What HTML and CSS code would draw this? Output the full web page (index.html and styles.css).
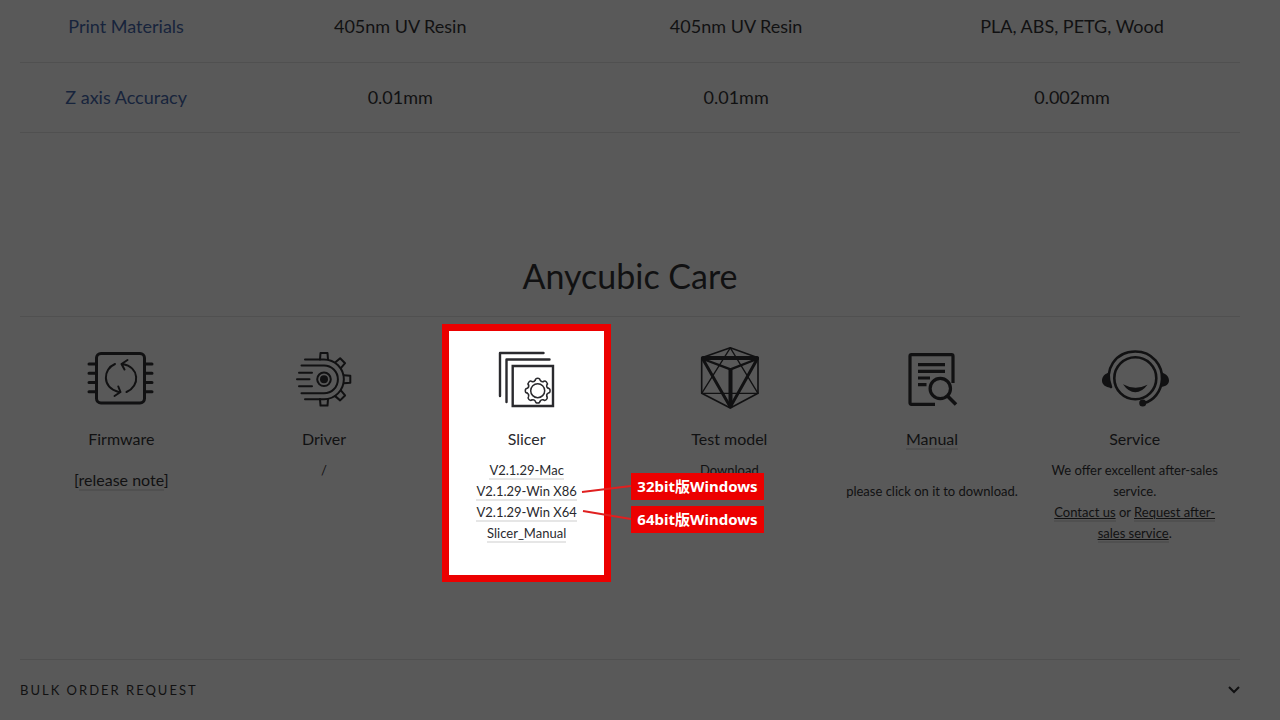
FILE: index.html
```html
<!DOCTYPE html>
<html lang="en">
<head>
    <meta charset="UTF-8">
    <meta name="viewport" content="width=device-width, initial-scale=1.0">
    <title>Anycubic Care</title>
    <link rel="stylesheet" href="styles.css">
</head>
<body>
    <main class="page">
        <table class="specs">
            <tr>
                <th scope="row">Print Materials</th>
                <td>405nm UV Resin</td>
                <td>405nm UV Resin</td>
                <td>PLA, ABS, PETG, Wood</td>
            </tr>
            <tr>
                <th scope="row">Z axis Accuracy</th>
                <td>0.01mm</td>
                <td>0.01mm</td>
                <td>0.002mm</td>
            </tr>
        </table>

        <h1>Anycubic Care</h1>

        <section class="care">
            <div class="care-item">
                <svg class="icon" viewBox="0 0 70 64" aria-hidden="true">
                    <rect x="10.500" y="7.500" width="48" height="49.500" rx="4.500" stroke-width="3"/>
                    <path stroke-width="3" d="M3 18H10M3 27.300H10M3 36.500H10M3 45.700H10M60 18H66M60 27.300H66M60 36.500H66M60 45.700H66"/>
                    <path stroke-width="2" d="M29 18C17 23 15.500 41 32.500 46M32.300 40.500L34.500 46L28.500 50M40.500 46C54.500 40 53.500 21 36.500 18M41.500 14L35.500 18L38.500 23.500"/>
                </svg>
                <h2>Firmware</h2>
                <p class="release">[<a href="#">release note</a>]</p>
            </div>

            <div class="care-item">
                <svg class="icon" viewBox="0 0 70 64" aria-hidden="true">
                    <g stroke-width="2">
                        <path d="M16 13.500H35A19.800 19.800 0 0 1 35 53.200H16"/>
                        <path d="M12.500 19.500H35A13.800 13.800 0 0 1 35 47.300H12.500"/>
                        <path d="M10 26.700H23M8 33.300H20.500M10 40.300H23"/>
                        <circle cx="35" cy="33.300" r="6.800"/>
                        <path id="tooth" d="M31 13.500L31.500 7H38.500L39 13.500"/>
                        <use href="#tooth" transform="rotate(45 35 33.300)"/>
                        <use href="#tooth" transform="rotate(90 35 33.300)"/>
                        <use href="#tooth" transform="rotate(135 35 33.300)"/>
                        <use href="#tooth" transform="rotate(180 35 33.300)"/>
                    </g>
                    <circle class="solid" cx="35" cy="33.300" r="4"/>
                </svg>
                <h2>Driver</h2>
                <p>/</p>
            </div>

            <div class="care-item highlight">
                <svg class="icon" viewBox="0 0 70 64" aria-hidden="true">
                    <g stroke-width="2.400">
                        <path d="M8 50V7H51.500"/>
                        <path d="M14.500 56V13.500H57.500"/>
                        <path stroke-linejoin="miter" d="M20.700 20H61V60H20.700Z"/>
                    </g>
                    <g stroke-width="1.500" transform="translate(45.700 44.700)">
                        <circle r="7"/>
                        <path id="petal" d="M-2.400 -10.500Q-2.200 -12.400 0 -12.400Q2.200 -12.400 2.400 -10.500Q3.600 -8.400 5.720 -9.160"/>
                        <use href="#petal" transform="rotate(45)"/>
                        <use href="#petal" transform="rotate(90)"/>
                        <use href="#petal" transform="rotate(135)"/>
                        <use href="#petal" transform="rotate(180)"/>
                        <use href="#petal" transform="rotate(225)"/>
                        <use href="#petal" transform="rotate(270)"/>
                        <use href="#petal" transform="rotate(315)"/>
                    </g>
                </svg>
                <h2>Slicer</h2>
                <p>
                    <a href="#">V2.1.29-Mac</a><br>
                    <a href="#">V2.1.29-Win X86</a><br>
                    <a href="#">V2.1.29-Win X64</a><br>
                    <a href="#">Slicer_Manual</a>
                </p>

                <!-- Callouts for the two Windows builds -->
                <div class="notes">
                    <svg class="leader" viewBox="0 0 50 60" aria-hidden="true">
                        <path d="M1 19L50 13M2 38L50 46"/>
                    </svg>
                    <div class="note-list">
                        <span class="note">32bit版Windows</span>
                        <span class="note">64bit版Windows</span>
                    </div>
                </div>
            </div>

            <div class="care-item">
                <svg class="icon" viewBox="0 0 70 64" aria-hidden="true">
                    <path stroke-width="1.600" d="M36.300 1.800L64 11.700V47.300L36.300 62L7.700 47.300V11.700Z"/>
                    <path stroke-width="1.300" d="M7.700 47.300L36.300 1.800L64 47.300Z"/>
                    <path stroke-width="3" d="M8.500 12.500L36.300 61L63.500 12.500"/>
                    <path stroke-width="4" d="M9 12H63M36.500 24V60"/>
                    <path stroke-width="2.400" d="M9 13L36.500 23.300L63 13"/>
                </svg>
                <h2>Test model</h2>
                <p>Download</p>
            </div>

            <div class="care-item">
                <svg class="icon" viewBox="0 0 70 64" aria-hidden="true">
                    <g stroke-width="3.200" stroke-linecap="butt">
                        <path d="M38 58.300H14.500Q13 58.300 13 56.800V10.200Q13 8.700 14.500 8.700H54.500Q56 8.700 56 10.200V37"/>
                        <path d="M21 18.700H48M21 25.300H48M21 32H33M21 38.700H29.500"/>
                        <circle cx="43.300" cy="42.500" r="10.200"/>
                        <path stroke-width="3.600" d="M50.500 50L59 58.500"/>
                    </g>
                </svg>
                <h2><a href="#">Manual</a></h2>
                <p><br>please click on it to download.</p>
            </div>

            <div class="care-item">
                <svg class="icon" viewBox="0 0 70 64" aria-hidden="true">
                    <circle cx="35.300" cy="32.300" r="21" stroke-width="2.600"/>
                    <path stroke-width="2.600" d="M11 41C4 24 15 5.500 35.300 5.500C53 5.500 62.500 20 62 33C61.500 46 53 55 44 57"/>
                    <path class="solid" d="M9.500 26.500C4.500 27.500 2 31 2 34.500C2 38.500 5 41 11.500 42C9.500 37 9 32 9.500 26.500Z"/>
                    <path class="solid" d="M62 26.500C66.500 28 69 31 69 34.500C69 38 66 40.500 60.500 41C62 37 62.500 32 62 26.500Z"/>
                    <path class="solid" d="M23 38.300Q35 45 47.500 38.800Q42 46.300 35.300 46.300Q28.500 46.300 23 38.300Z"/>
                    <circle class="solid" cx="42.700" cy="57" r="3.500"/>
                </svg>
                <h2>Service</h2>
                <p>We offer excellent after-sales service.<br>
                    <a class="underlined" href="#">Contact us</a> or <a class="underlined" href="#">Request after-sales service</a>.</p>
            </div>
        </section>

        <button class="accordion" type="button">
            <span>BULK ORDER REQUEST</span>
            <svg class="chevron" viewBox="0 0 12 8" aria-hidden="true">
                <path d="M1 1L6 6L11 1"/>
            </svg>
        </button>
    </main>
</body>
</html>
```

FILE: styles.css
```css
:root {
    --bg: #595959;
    --text: #111112;
    --rule: #505050;
    --label: #17243c;
    --red: #ec0000;
}

* {
    box-sizing: border-box;
    margin: 0;
    padding: 0;
}

body {
    background: var(--bg);
    color: var(--text);
    font-family: Lato, 'Liberation Sans', sans-serif;
    font-size: 13px;
    line-height: 21px;
}

.page {
    padding: 0 40px 0 20px;
}

a {
    color: inherit;
    text-decoration: none;
    border-bottom: 2px solid var(--rule);
}

/* Specs table */
.specs {
    width: 100%;
    margin-top: -8px;
    table-layout: fixed;
    border-collapse: collapse;
    font-size: 18px;
}

.specs th,
.specs td {
    height: 70px;
    border-bottom: 1px solid var(--rule);
    text-align: center;
    font-weight: normal;
}

.specs th {
    width: 17.4%;
    color: var(--label);
}

h1 {
    padding: 119px 0 16px;
    border-bottom: 1px solid var(--rule);
    font-size: 34px;
    line-height: 48px;
    font-weight: normal;
    text-align: center;
}

/* Care columns */
.care {
    display: grid;
    grid-template-columns: repeat(6, 1fr);
    margin-right: 4px;
    padding: 7px 0 77px;
}

.care-item {
    min-height: 258px;
    padding: 22px 12px 0;
    text-align: center;
}

.care-item h2 {
    margin: 17px 0 9px;
    font-size: 16px;
    line-height: 24px;
    font-weight: normal;
}

.care-item .release {
    margin-top: 18px;
    font-size: 16px;
}

.care-item .underlined {
    text-decoration: underline;
}

.icon {
    display: block;
    width: 70px;
    height: 64px;
    margin: 0 auto;
    fill: none;
    stroke: currentColor;
    stroke-linecap: round;
    stroke-linejoin: round;
}

.icon .solid {
    fill: currentColor;
    stroke: none;
}

.highlight {
    position: relative;
    margin: 0 17px;
    padding: 15px 0 0;
    border: 7px solid var(--red);
    background: #fff;
    color: #2a2a2e;
}

.highlight a {
    border-color: #e6e6e6;
}

/* Callouts */
.notes {
    position: absolute;
    top: 142px;
    left: 132px;
    z-index: 1;
    display: flex;
}

.leader {
    width: 50px;
    height: 60px;
    fill: none;
    stroke: #e02020;
    stroke-width: 2;
}

.note-list {
    display: flex;
    flex-direction: column;
    gap: 6px;
}

.note {
    padding: 0 6px;
    background: var(--red);
    color: #fff;
    font-family: 'Noto Sans', 'Noto Sans CJK JP', sans-serif;
    font-size: 15px;
    line-height: 27px;
    font-weight: bold;
    white-space: nowrap;
}

/* Accordion row */
.accordion {
    display: flex;
    align-items: center;
    justify-content: space-between;
    width: 100%;
    height: 61px;
    border: none;
    border-top: 1px solid var(--rule);
    background: none;
    color: inherit;
    font-family: inherit;
    font-size: 13px;
    letter-spacing: 2px;
    cursor: pointer;
}

.chevron {
    width: 12px;
    height: 8px;
    fill: none;
    stroke: currentColor;
    stroke-width: 2;
}
```
